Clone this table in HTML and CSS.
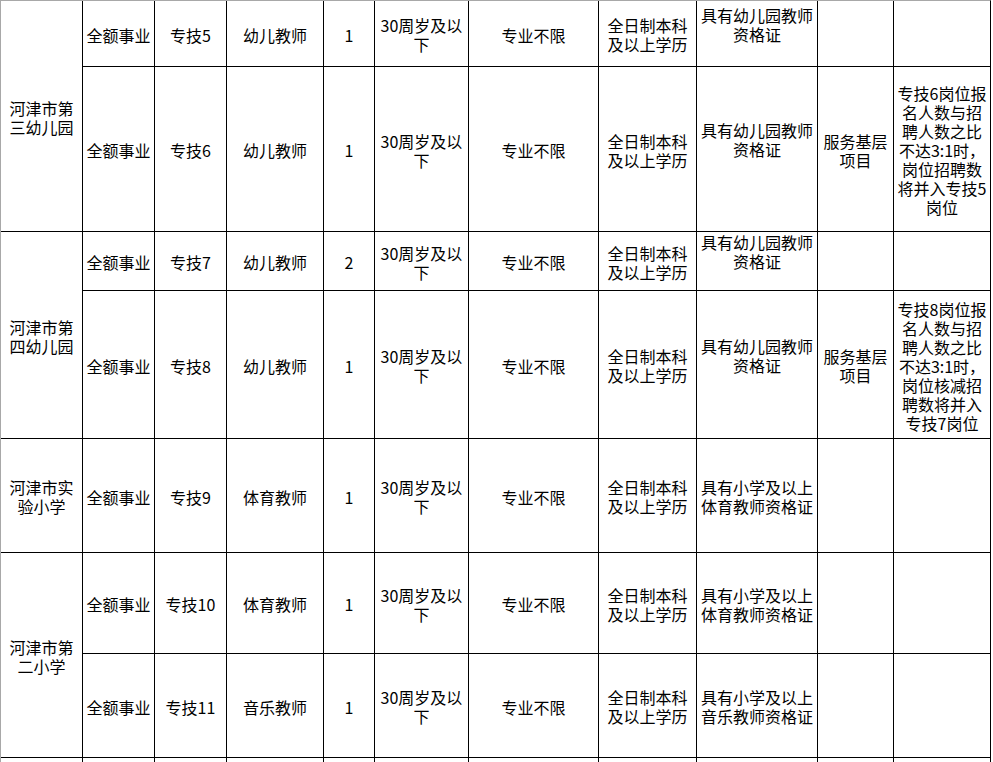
FILE: index.html
```html
<!DOCTYPE html>
<html lang="zh-CN">
<head>
<meta charset="utf-8">
<title>岗位表</title>
<link rel="stylesheet" href="styles.css">
</head>
<body>
<div class="sheet">
  <!-- row 1 -->
  <div class="c span2"><span>河津市第<br>三幼儿园</span></div>
  <div class="c"><span>全额事业</span></div>
  <div class="c"><span>专技5</span></div>
  <div class="c"><span>幼儿教师</span></div>
  <div class="c"><span>1</span></div>
  <div class="c"><span>30周岁及以<br>下</span></div>
  <div class="c"><span>专业不限</span></div>
  <div class="c"><span>全日制本科<br>及以上学历</span></div>
  <div class="c"><span class="cert">具有幼儿园教师<br>资格证</span></div>
  <div class="c"></div>
  <div class="c"></div>
  <!-- row 2 -->
  <div class="c"><span>全额事业</span></div>
  <div class="c"><span>专技6</span></div>
  <div class="c"><span>幼儿教师</span></div>
  <div class="c"><span>1</span></div>
  <div class="c"><span>30周岁及以<br>下</span></div>
  <div class="c"><span>专业不限</span></div>
  <div class="c"><span>全日制本科<br>及以上学历</span></div>
  <div class="c"><span class="cert">具有幼儿园教师<br>资格证</span></div>
  <div class="c"><span>服务基层<br>项目</span></div>
  <div class="c"><span>专技6岗位报<br>名人数与招<br>聘人数之比<br>不达3:1时，<br>岗位招聘数<br>将并入专技5<br>岗位</span></div>
  <!-- row 3 -->
  <div class="c span2"><span>河津市第<br>四幼儿园</span></div>
  <div class="c"><span>全额事业</span></div>
  <div class="c"><span>专技7</span></div>
  <div class="c"><span>幼儿教师</span></div>
  <div class="c"><span>2</span></div>
  <div class="c"><span>30周岁及以<br>下</span></div>
  <div class="c"><span>专业不限</span></div>
  <div class="c"><span>全日制本科<br>及以上学历</span></div>
  <div class="c"><span class="cert">具有幼儿园教师<br>资格证</span></div>
  <div class="c"></div>
  <div class="c"></div>
  <!-- row 4 -->
  <div class="c"><span>全额事业</span></div>
  <div class="c"><span>专技8</span></div>
  <div class="c"><span>幼儿教师</span></div>
  <div class="c"><span>1</span></div>
  <div class="c"><span>30周岁及以<br>下</span></div>
  <div class="c"><span>专业不限</span></div>
  <div class="c"><span>全日制本科<br>及以上学历</span></div>
  <div class="c"><span class="cert">具有幼儿园教师<br>资格证</span></div>
  <div class="c"><span>服务基层<br>项目</span></div>
  <div class="c"><span>专技8岗位报<br>名人数与招<br>聘人数之比<br>不达3:1时，<br>岗位核减招<br>聘数将并入<br>专技7岗位</span></div>
  <!-- row 5 -->
  <div class="c"><span>河津市实<br>验小学</span></div>
  <div class="c"><span>全额事业</span></div>
  <div class="c"><span>专技9</span></div>
  <div class="c"><span>体育教师</span></div>
  <div class="c"><span>1</span></div>
  <div class="c"><span>30周岁及以<br>下</span></div>
  <div class="c"><span>专业不限</span></div>
  <div class="c"><span>全日制本科<br>及以上学历</span></div>
  <div class="c"><span>具有小学及以上<br>体育教师资格证</span></div>
  <div class="c"></div>
  <div class="c"></div>
  <!-- row 6 -->
  <div class="c span2"><span>河津市第<br>二小学</span></div>
  <div class="c"><span>全额事业</span></div>
  <div class="c"><span>专技10</span></div>
  <div class="c"><span>体育教师</span></div>
  <div class="c"><span>1</span></div>
  <div class="c"><span>30周岁及以<br>下</span></div>
  <div class="c"><span>专业不限</span></div>
  <div class="c"><span>全日制本科<br>及以上学历</span></div>
  <div class="c"><span>具有小学及以上<br>体育教师资格证</span></div>
  <div class="c"></div>
  <div class="c"></div>
  <!-- row 7 -->
  <div class="c"><span>全额事业</span></div>
  <div class="c"><span>专技11</span></div>
  <div class="c"><span>音乐教师</span></div>
  <div class="c"><span>1</span></div>
  <div class="c"><span>30周岁及以<br>下</span></div>
  <div class="c"><span>专业不限</span></div>
  <div class="c"><span>全日制本科<br>及以上学历</span></div>
  <div class="c"><span>具有小学及以上<br>音乐教师资格证</span></div>
  <div class="c"></div>
  <div class="c"></div>
  <!-- row 8 (cut off) -->
  <div class="c"></div>
  <div class="c"></div>
  <div class="c"></div>
  <div class="c"></div>
  <div class="c"></div>
  <div class="c"></div>
  <div class="c"></div>
  <div class="c"></div>
  <div class="c"></div>
  <div class="c"></div>
  <div class="c"></div>
</div>
</body>
</html>
```
FILE: styles.css
```css
html, body {
  margin: 0;
  padding: 0;
  background: #fff;
  overflow: hidden;
}

.sheet {
  display: grid;
  grid-template-columns: 81px 71px 71px 96px 50px 93px 129px 97px 120px 75px 96px;
  grid-template-rows: 65px 164px 58px 147px 113px 100px 103px 4px;
  gap: 1px;
  width: max-content;
  background: #000;
  border-top: 1px solid #a8a8a8;
  border-left: 1px solid #a8a8a8;
  border-right: 1px solid #000;
  font-family: "Noto Sans CJK SC", "Noto Sans", sans-serif;
  font-size: 16px;
  line-height: 19px;
  color: #000;
}

.c {
  background: #fff;
  display: flex;
  align-items: center;
  justify-content: center;
  text-align: center;
  white-space: nowrap;
}

.c > span {
  display: block;
  padding-top: 3px;
}

.span2 {
  grid-row: span 2;
}

.c > .cert {
  padding-top: 0;
  padding-bottom: 18px;
}
```
